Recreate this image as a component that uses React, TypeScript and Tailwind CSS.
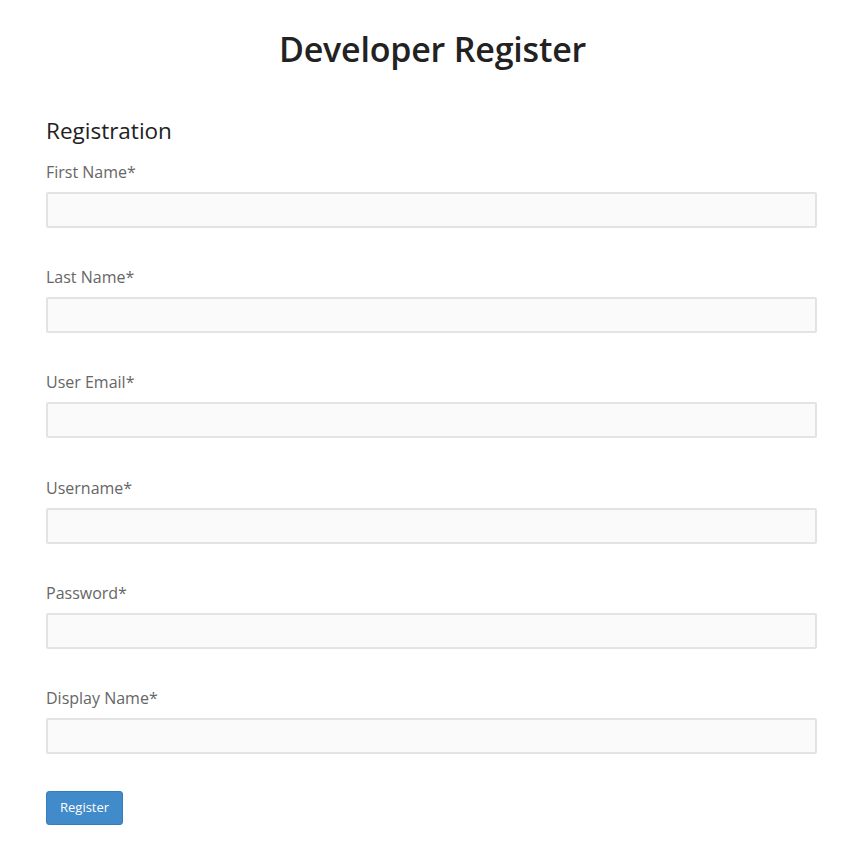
const fields = ["First Name*", "Last Name*", "User Email*", "Username*", "Password*", "Display Name*"]

const App = () => {
  return (
    <main className="min-h-[866px] bg-white px-[46px] pt-[26px] text-[#222] [font-family:'Open_Sans',sans-serif]">
      <h1 className="text-center text-[34px] font-semibold leading-[46px] tracking-[-0.2px] text-[#222]">
        Developer Register
      </h1>
      <h2 className="mt-[44px] text-[22.5px] leading-[30px] text-[#222]">Registration</h2>
      <form className="mt-[14px] w-[771px]">
        {fields.map((f) => (
          <div key={f} className="mb-[37.2px]">
            <label className="block text-[16px] leading-[24px] text-[#666]">{f}</label>
            <input
              type={f.startsWith("Password") ? "password" : "text"}
              className="mt-[8px] block h-[36px] w-full rounded-[2px] border-2 border-[#e3e3e3] bg-[#fafafa] outline-none"
            />
          </div>
        ))}
        <button
          type="button"
          className="h-[34px] rounded-[3px] border border-[#357ebd] bg-[#428bca] px-[13px] text-[13px] text-white"
        >
          Register
        </button>
      </form>
    </main>
  )
}

export default App
